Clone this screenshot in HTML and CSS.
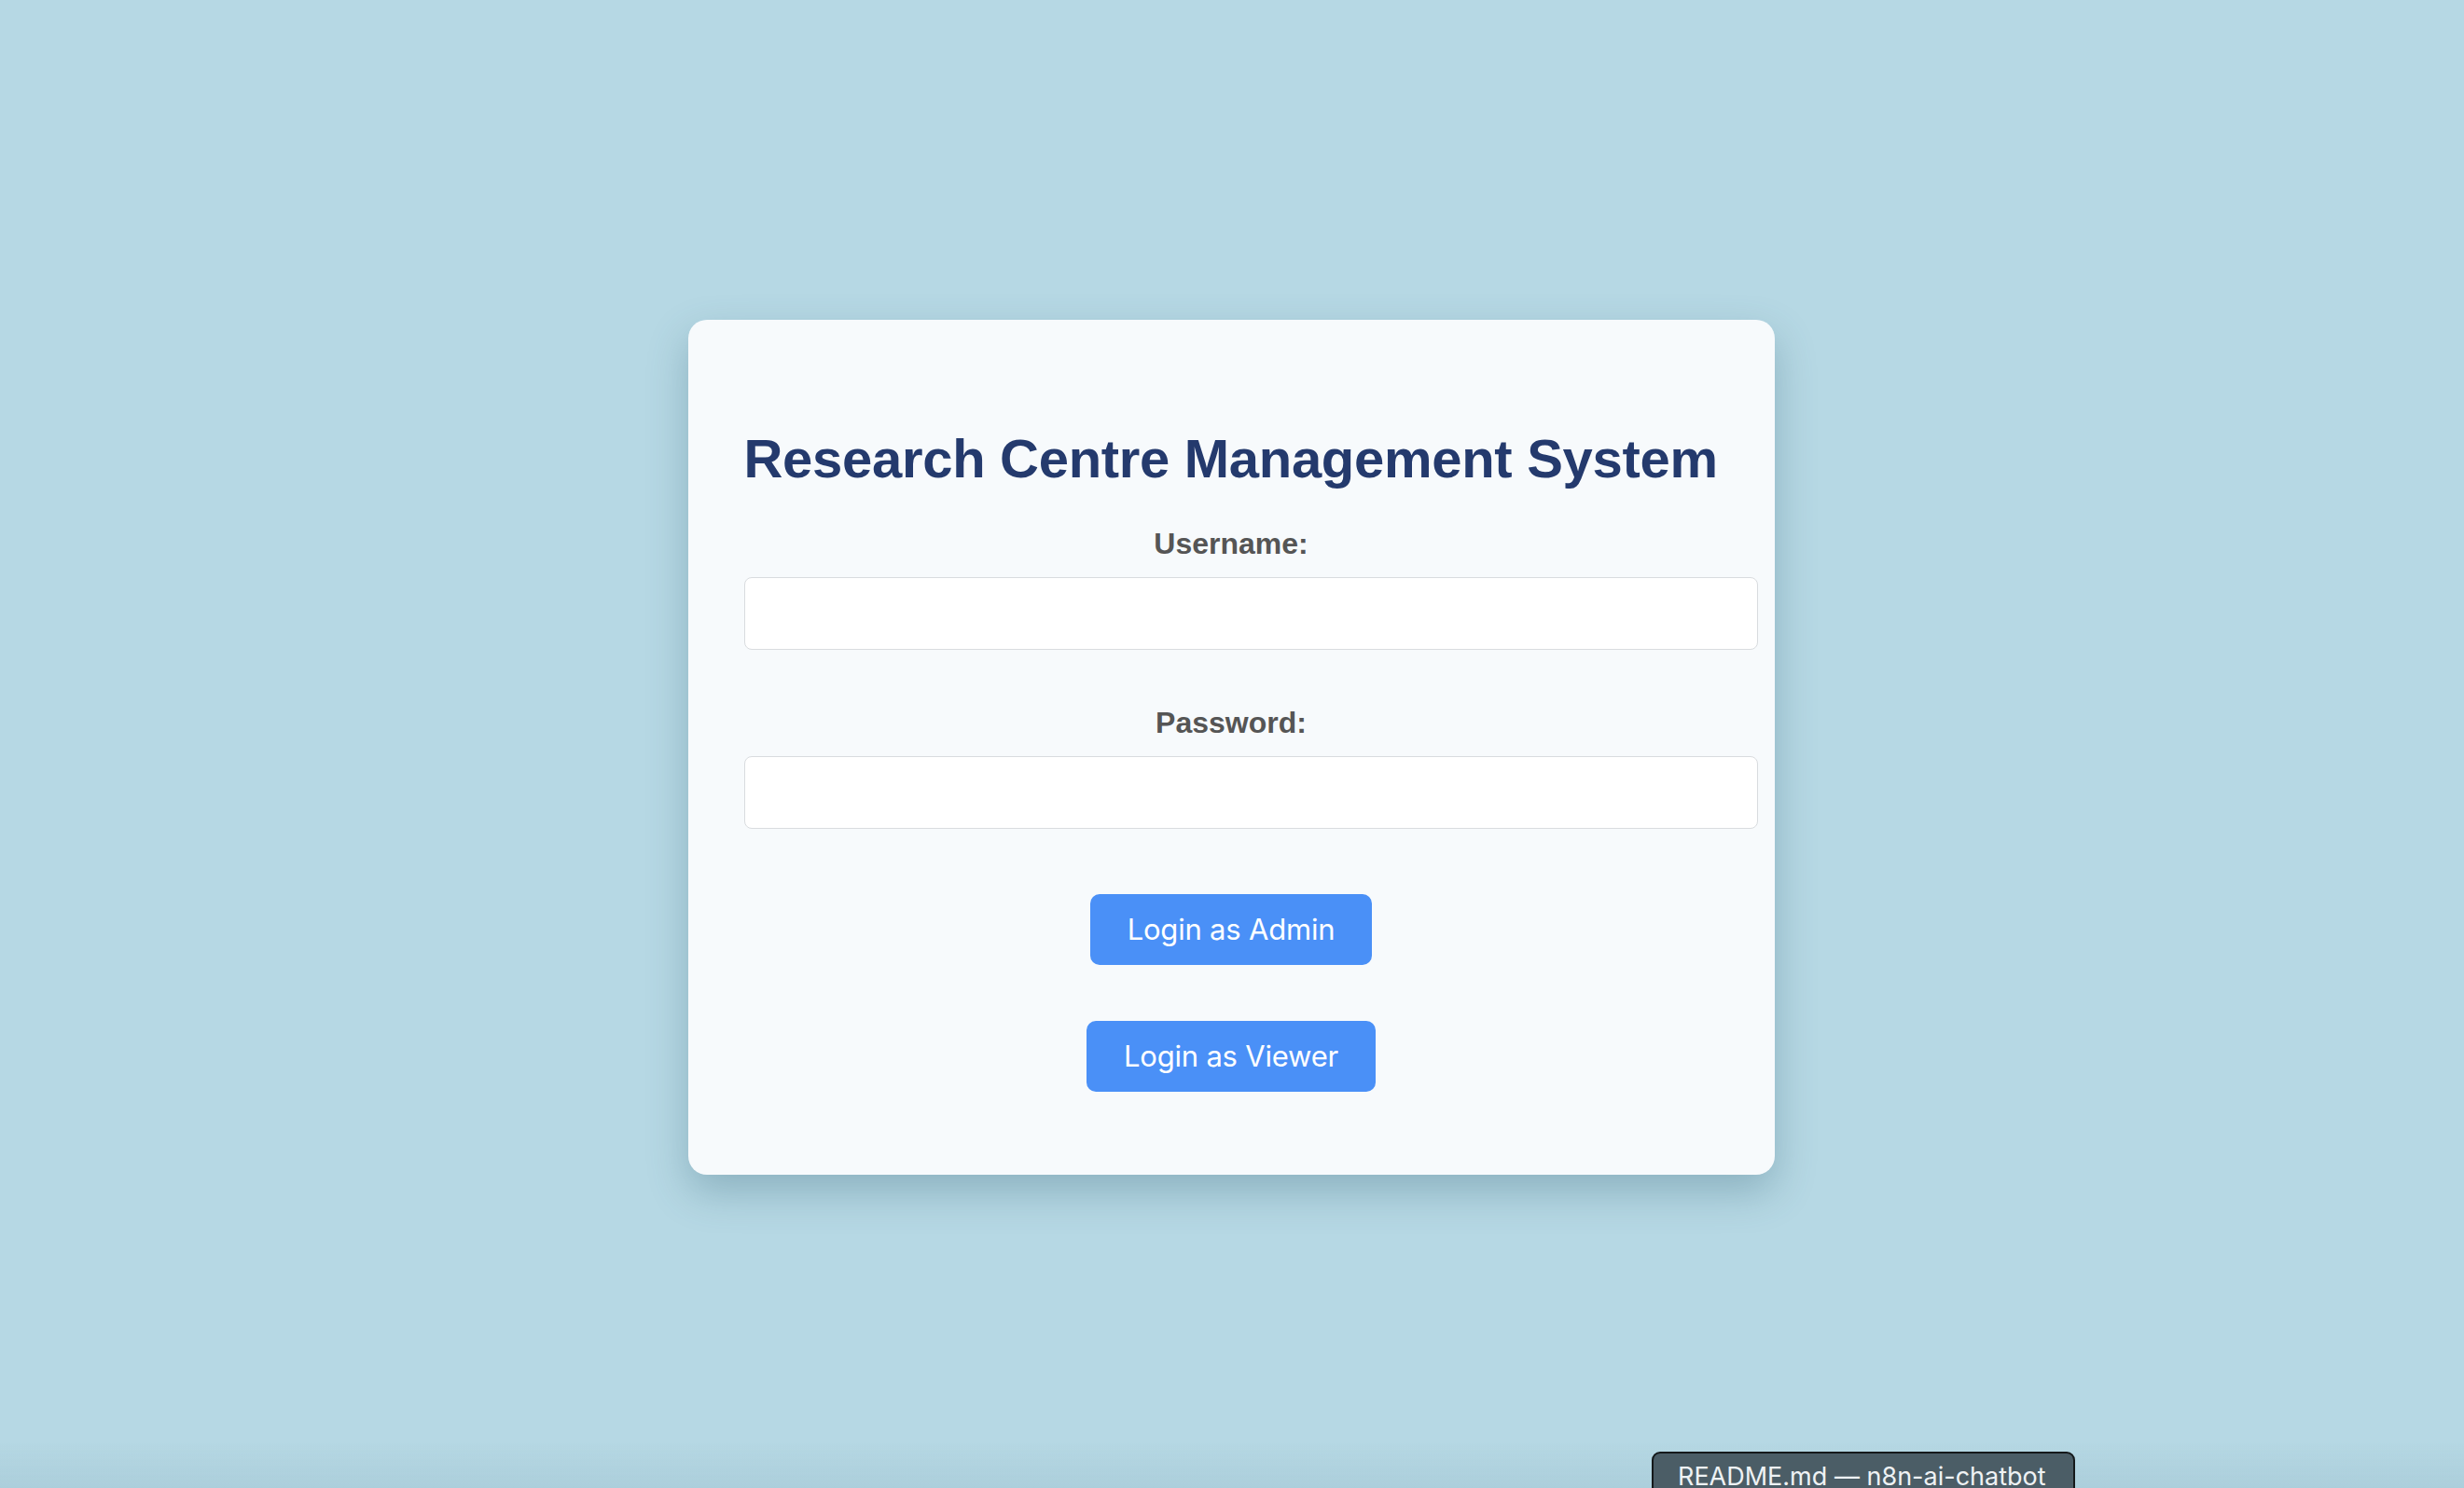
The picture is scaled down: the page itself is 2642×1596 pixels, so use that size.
FILE: index.html
```html
<!DOCTYPE html>
<html lang="en">
<head>
<meta charset="utf-8">
<title>Research Centre Management System</title>
<link rel="stylesheet" href="styles.css">
</head>
<body>
<main class="page">
  <form class="card" onsubmit="return false">
    <h1 class="title">Research Centre Management System</h1>
    <label class="label" for="username">Username:</label>
    <input class="field" id="username" type="text">
    <label class="label label-second" for="password">Password:</label>
    <input class="field" id="password" type="password">
    <button class="btn btn-first" type="button">Login as Admin</button>
    <button class="btn btn-second" type="button">Login as Viewer</button>
  </form>
</main>
<div class="dock-shade"></div>
<div class="dock-tip">README.md — n8n-ai-chatbot</div>
</body>
</html>
```
FILE: styles.css
```css
html, body {
  margin: 0;
  padding: 0;
}
body {
  background: #b6d8e4;
  font-family: "Liberation Sans", Arial, sans-serif;
  overflow: hidden;
}
.page {
  height: 1596px;
  box-sizing: border-box;
  padding-top: 6px;
  padding-right: 2px;
  display: flex;
  align-items: center;
  justify-content: center;
}
.card {
  width: 1165px;
  box-sizing: border-box;
  padding: 60px 60px 89px 60px;
  background: #f7fafc;
  border-radius: 20px;
  box-shadow: 0 18px 44px rgba(50, 95, 115, 0.32);
}
.title {
  margin: 55px 0 40px 0;
  font-family: "Liberation Sans", Arial, sans-serif;
  font-weight: 700;
  font-size: 58px;
  line-height: 67px;
  letter-spacing: -0.3px;
  color: #243a6d;
  white-space: nowrap;
}
.label {
  display: block;
  text-align: center;
  font-weight: 700;
  font-size: 32px;
  line-height: 37px;
  color: #555555;
  margin-bottom: 17px;
}
.label-second {
  margin-top: 60px;
}
.field {
  display: block;
  width: 100%;
  height: 36px;
  padding: 20px;
  margin: 0;
  border: 1.5px solid #d9dcdf;
  border-radius: 8px;
  background: #ffffff;
  font-size: 30px;
  box-sizing: content-box;
  outline: none;
}
.btn {
  display: block;
  margin: 0 auto;
  height: 76px;
  padding: 0 40px;
  border: none;
  border-radius: 10px;
  background: #4a90f7;
  color: #ffffff;
  font-family: Inter, "Noto Sans", sans-serif;
  font-size: 31px;
  letter-spacing: -0.2px;
}
.btn-first {
  margin-top: 70px;
}
.btn-second {
  margin-top: 60px;
}
.dock-shade {
  position: fixed;
  left: 0;
  right: 0;
  bottom: 0;
  height: 50px;
  background: linear-gradient(to bottom, rgba(120, 160, 175, 0), rgba(120, 160, 175, 0.16));
  pointer-events: none;
}
.dock-tip {
  position: fixed;
  left: 1771px;
  top: 1557px;
  width: 454px;
  height: 70px;
  box-sizing: border-box;
  padding: 8px 0 0 26px;
  background: #4b5d66;
  border: 2px solid #15191b;
  border-radius: 9px;
  color: #eef2f4;
  font-family: Inter, "Noto Sans", sans-serif;
  font-size: 27px;
  line-height: 34px;
  white-space: nowrap;
}
```
